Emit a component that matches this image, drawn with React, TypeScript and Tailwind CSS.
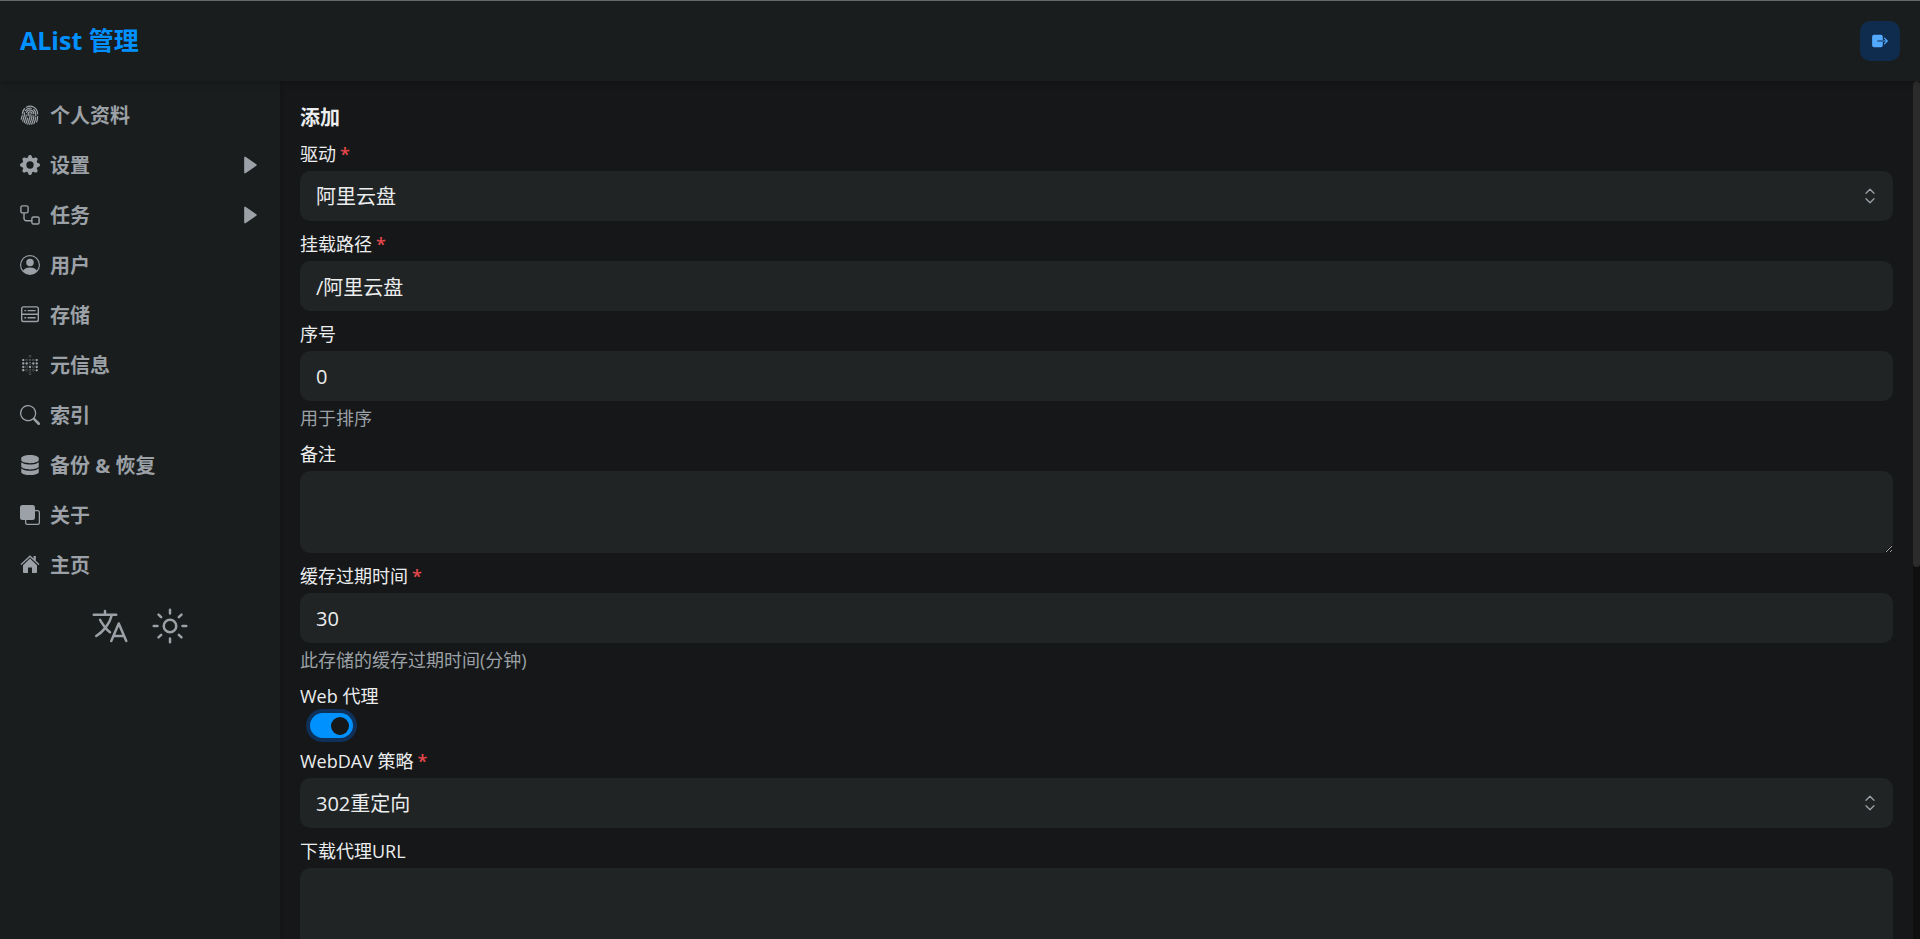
import React from 'react';
import {
  BsFingerprint,
  BsFront,
  BsGearFill,
  BsPersonCircle,
  BsSearch,
} from 'react-icons/bs';
import { SiMetabase } from 'react-icons/si';
import { FaDatabase } from 'react-icons/fa6';
import { IoExit, IoLanguageOutline, IoSunnyOutline } from 'react-icons/io5';
import { BiSolidRightArrow } from 'react-icons/bi';

type Icon = React.ComponentType<{ className?: string }>;

const WorkflowIcon: Icon = ({ className }) => (
  <svg viewBox="0 0 20 20" className={className} fill="none" stroke="currentColor" strokeWidth="1.4">
    <rect x="0.9" y="0.9" width="7.2" height="7" rx="1.6" />
    <rect x="11.9" y="12" width="7.2" height="7" rx="1.6" />
    <path d="M4 8v5.5a2.2 2.2 0 0 0 2.2 2.2H12" />
  </svg>
);

const StorageIcon: Icon = ({ className }) => (
  <svg viewBox="0 0 20 20" className={className} fill="none" stroke="currentColor" strokeWidth="1.4">
    <rect x="1.7" y="1.9" width="16.6" height="14.6" rx="1.8" />
    <path d="M1.7 9.2h16.6M4.4 5.6h1.8M7.6 5.6h8M4.4 12.8h1.8M7.6 12.8h8" />
  </svg>
);

const HomeIcon: Icon = ({ className }) => (
  <svg viewBox="0 0 20 20" className={className} fill="currentColor">
    <path d="M1.4 9.3 10 1.2l8.6 8.1" fill="none" stroke="currentColor" strokeWidth="1.3" strokeLinecap="round" />
    <path d="M13.5 1h2.3v5l-2.3-2.2z" />
    <path d="M10 3.6 17 10.2v7a.8.8 0 0 1-.8.8H12v-5.600H8V18H3.800a.8.8 0 0 1-.8-.8v-7z" />
  </svg>
);

const SelectorIcon: Icon = ({ className }) => (
  <svg
    viewBox="0 0 10 16"
    className={className}
    fill="none"
    stroke="currentColor"
    strokeWidth="1.3"
    strokeLinecap="round"
    strokeLinejoin="round"
  >
    <path d="M1 5.200 5 1.200l4 4M1 10.800l4 4 4-4" />
  </svg>
);

interface MenuItem {
  title: string;
  icon: Icon;
  expandable?: boolean;
}

const menuItems: MenuItem[] = [
  { title: '个人资料', icon: BsFingerprint },
  { title: '设置', icon: BsGearFill, expandable: true },
  { title: '任务', icon: WorkflowIcon, expandable: true },
  { title: '用户', icon: BsPersonCircle },
  { title: '存储', icon: StorageIcon },
  { title: '元信息', icon: SiMetabase },
  { title: '索引', icon: BsSearch },
  { title: '备份 & 恢复', icon: FaDatabase },
  { title: '关于', icon: BsFront },
  { title: '主页', icon: HomeIcon },
];

const controlClass =
  'block w-full rounded-[10px] bg-[#202425] px-4 text-[20px] leading-[30px] text-[#ecedee] outline-none';

interface FieldProps {
  id: string;
  label: string;
  required?: boolean;
  help?: string;
  children: React.ReactNode;
}

const Field: React.FC<FieldProps> = ({ id, label, required, help, children }) => {
  return (
    <div className="flex flex-col gap-1">
      <label htmlFor={id} className="text-[18px] leading-[26px] text-[#ecedee]">
        {label}
        {required && <span className="ml-1 font-semibold text-[#e5484d]">*</span>}
      </label>
      {children}
      {help && <p className="text-[18px] leading-[26px] text-[#9ba1a6]">{help}</p>}
    </div>
  );
};

const SelectBox: React.FC<{ id: string; value: string }> = ({ id, value }) => {
  return (
    <div className="relative">
      <select id={id} defaultValue={value} className={`${controlClass} h-[50px] appearance-none pt-0.5`}>
        <option value={value}>{value}</option>
      </select>
      <SelectorIcon className="pointer-events-none absolute top-1/2 right-[18px] h-4 w-[10px] -translate-y-1/2 text-[#9ba1a6]" />
    </div>
  );
};

const Header: React.FC = () => {
  return (
    <header className="z-10 flex h-[81px] shrink-0 items-center justify-between border-t border-[#62686a] bg-[#1a1d1e] px-5 shadow-md">
      <a href="#" className="pb-0.5 text-[25px] leading-[38px] font-bold text-[#0091ff]">
        AList 管理
      </a>
      <button
        type="button"
        aria-label="退出"
        className="flex size-10 items-center justify-center rounded-[10px] bg-[#0f2b4d] text-[#52a9ff]"
      >
        <IoExit className="size-[18px]" />
      </button>
    </header>
  );
};

const SideMenu: React.FC = () => {
  return (
    <aside className="flex w-[280px] shrink-0 flex-col bg-[#1a1d1e] pt-[9px] text-[#9ba1a6] shadow-md">
      <nav>
        {menuItems.map(({ title, icon: ItemIcon, expandable }) => (
          <a
            key={title}
            href="#"
            className="flex h-[50px] items-center gap-[10px] px-5 text-[20px] leading-[30px] font-bold"
          >
            <ItemIcon className="size-5" />
            <span className="grow pt-0.5">{title}</span>
            {expandable && <BiSolidRightArrow className="size-5" />}
          </a>
        ))}
      </nav>
      <div className="mt-4 flex justify-center gap-5">
        <button type="button" aria-label="语言">
          <IoLanguageOutline className="size-10" />
        </button>
        <button type="button" aria-label="主题">
          <IoSunnyOutline className="size-10" />
        </button>
      </div>
    </aside>
  );
};

export default function App() {
  return (
    <div className="flex h-screen flex-col overflow-hidden bg-[#151718] font-['Open_Sans','Noto_Sans_CJK_SC',sans-serif]">
      <Header />
      <div className="flex min-h-0 grow">
        <SideMenu />
        <main className="min-w-0 grow overflow-hidden p-5">
          <form className="flex flex-col gap-[10px]">
            <h2 className="pt-[3px] text-[20px] leading-[27px] font-bold text-[#ecedee]">添加</h2>
            <Field id="driver" label="驱动" required>
              <SelectBox id="driver" value="阿里云盘" />
            </Field>
            <Field id="mount_path" label="挂载路径" required>
              <input id="mount_path" type="text" defaultValue="/阿里云盘" className={`${controlClass} h-[50px]`} />
            </Field>
            <Field id="order" label="序号" help="用于排序">
              <input id="order" type="text" inputMode="numeric" defaultValue="0" className={`${controlClass} h-[50px]`} />
            </Field>
            <Field id="remark" label="备注">
              <textarea id="remark" className={`${controlClass} h-[82px] resize-y py-2`} />
            </Field>
            <Field id="cache_expiration" label="缓存过期时间" required help="此存储的缓存过期时间(分钟)">
              <input
                id="cache_expiration"
                type="text"
                inputMode="numeric"
                defaultValue="30"
                className={`${controlClass} h-[50px]`}
              />
            </Field>
            <Field id="web_proxy" label="Web 代理">
              <span className="relative ml-[10px] flex h-[25px] w-[43px] items-center justify-end px-1">
                <input
                  id="web_proxy"
                  type="checkbox"
                  role="switch"
                  defaultChecked
                  className="absolute inset-0 appearance-none rounded-full bg-[#0091ff] ring-4 ring-[#0f3058]"
                />
                <span className="pointer-events-none relative size-[18px] rounded-full bg-[#151718]" />
              </span>
            </Field>
            <Field id="webdav_policy" label="WebDAV 策略" required>
              <SelectBox id="webdav_policy" value="302重定向" />
            </Field>
            <Field id="down_proxy_url" label="下载代理URL">
              <textarea id="down_proxy_url" className={`${controlClass} h-[82px] resize-y py-2`} />
            </Field>
          </form>
        </main>
        <div className="w-[7px] shrink-0 bg-[#0f0f0f]">
          <div className="h-17/30 rounded-full bg-[#2c2c2c]" />
        </div>
      </div>
    </div>
  );
}
